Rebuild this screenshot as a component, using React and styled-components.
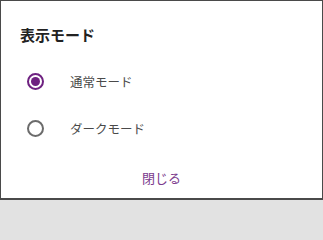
import React, { useState } from 'react';
import styled, { createGlobalStyle } from 'styled-components';

const GlobalStyle = createGlobalStyle`
  html, body {
    margin: 0;
    padding: 0;
    background: #e2e2e2;
  }
  body {
    font-family: "Noto Sans CJK JP", "Noto Sans", sans-serif;
  }
`;

const Dialog = styled.div`
  box-sizing: border-box;
  width: 323px;
  height: 200px;
  background: #fff;
  border: 1px solid #4a4a4a;
  border-bottom-width: 2px;
  display: flex;
  flex-direction: column;
  padding-top: 22px;
`;

const Title = styled.h2`
  margin: 0 0 0 19px;
  font-size: 15px;
  font-weight: 700;
  line-height: 24px;
  color: #222;
`;

const Options = styled.div`
  display: flex;
  flex-direction: column;
  margin-top: 11px;
`;

const Option = styled.label`
  display: flex;
  align-items: center;
  height: 47px;
  padding-left: 26px;
  cursor: pointer;
`;

const Radio = styled.span`
  box-sizing: border-box;
  width: 17px;
  height: 17px;
  border-radius: 50%;
  border: 2px solid ${p => (p.checked ? '#6e2180' : '#6b6b6b')};
  display: flex;
  align-items: center;
  justify-content: center;

  &::after {
    content: '';
    width: 9px;
    height: 9px;
    border-radius: 50%;
    background: #6e2180;
    display: ${p => (p.checked ? 'block' : 'none')};
  }
`;

const OptionText = styled.span`
  margin-left: 26px;
  font-size: 12.5px;
  color: #4a4a4a;
`;

const Footer = styled.div`
  display: flex;
  justify-content: center;
  margin-top: 16px;
`;

const CloseButton = styled.button`
  background: none;
  border: 0;
  padding: 0;
  font-family: inherit;
  font-size: 13px;
  color: #7b3a8d;
  cursor: pointer;
`;

const modes = [
  { id: 'normal', label: '通常モード' },
  { id: 'dark', label: 'ダークモード' },
];

export default function App() {
  const [mode, setMode] = useState('normal');

  return (
    <>
      <GlobalStyle />
      <Dialog>
        <Title>表示モード</Title>
        <Options>
          {modes.map(m => (
            <Option key={m.id} onClick={() => setMode(m.id)}>
              <Radio checked={mode === m.id} />
              <OptionText>{m.label}</OptionText>
            </Option>
          ))}
        </Options>
        <Footer>
          <CloseButton>閉じる</CloseButton>
        </Footer>
      </Dialog>
    </>
  );
}
